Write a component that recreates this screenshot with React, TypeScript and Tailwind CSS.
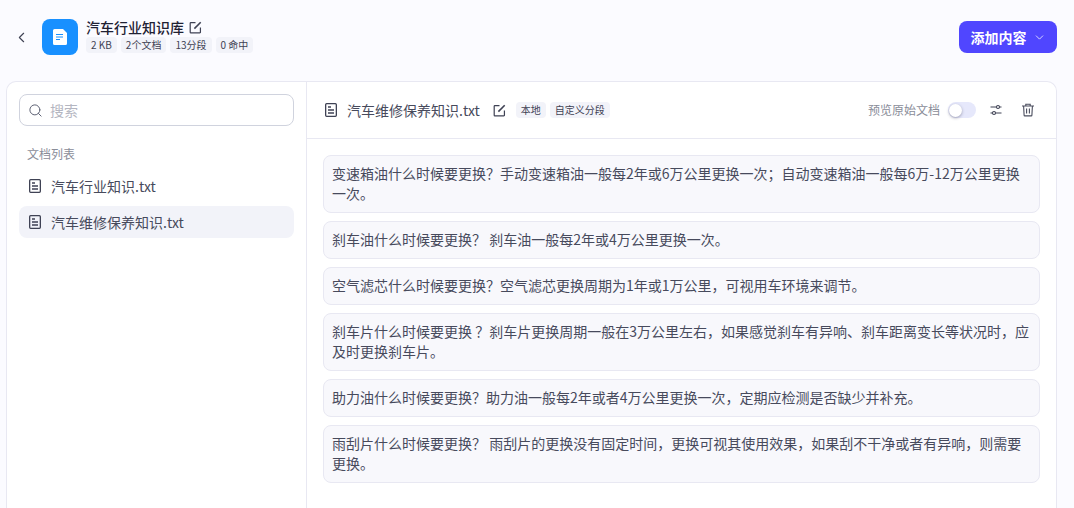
import { ChevronDown, ChevronLeft, Search } from "lucide-react"

const cjk = "font-['Noto_Sans_CJK_SC',sans-serif]"

const segments = [
  "变速箱油什么时候要更换？手动变速箱油一般每2年或6万公里更换一次；自动变速箱油一般每6万-12万公里更换一次。",
  "刹车油什么时候要更换？ 刹车油一般每2年或4万公里更换一次。",
  "空气滤芯什么时候要更换？空气滤芯更换周期为1年或1万公里，可视用车环境来调节。",
  "刹车片什么时候要更换 ？刹车片更换周期一般在3万公里左右，如果感觉刹车有异响、刹车距离变长等状况时，应及时更换刹车片。",
  "助力油什么时候要更换？助力油一般每2年或者4万公里更换一次，定期应检测是否缺少并补充。",
  "雨刮片什么时候要更换？ 雨刮片的更换没有固定时间，更换可视其使用效果，如果刮不干净或者有异响，则需要更换。",
]

const DocIcon = () => (
  <svg width="14" height="14" viewBox="0 0 14 14" fill="none" stroke="#3f4254" strokeWidth="1.3" className="shrink-0">
    <rect x="1.65" y="0.65" width="10.7" height="12.7" rx="1" />
    <path d="M4 4h3M4 7h6M4 10h6" />
  </svg>
)

const EditIcon = () => (
  <svg width="13" height="13" viewBox="0 0 14 14" fill="none" stroke="#3f4254" strokeWidth="1.3" className="shrink-0">
    <path d="M7 1.7H2a.7.7 0 0 0-.7.7v9.6c0 .4.3.7.7.7h9.6a.7.7 0 0 0 .7-.7V7" />
    <path d="M5.8 8.2 12.6 1.4" strokeWidth="1.7" />
  </svg>
)

const TuneIcon = () => (
  <svg width="12" height="12" viewBox="0 0 12 12" fill="none" stroke="#3f4254" strokeWidth="1.1">
    <path d="M0.5 3h6M9.5 3h2M0.5 9h2M5.5 9h6" />
    <circle cx="8" cy="3" r="1.5" />
    <circle cx="4" cy="9" r="1.5" />
  </svg>
)

const TrashIcon = () => (
  <svg width="14" height="14" viewBox="0 0 14 14" fill="none" stroke="#4a4d5e" strokeWidth="1.1" className="ml-[19px]">
    <path d="M1 3h12M4.8 3V1.2h4.4V3M2.6 3l.5 9.2c0 .4.3.7.7.7h6.4c.4 0 .7-.3.7-.7l.5-9.2M5.6 5.6v4.8M8.4 5.6v4.8" />
  </svg>
)

const Tag = ({ children }: { children: string }) => (
  <span className="rounded-[4px] bg-[#f2f3f9] px-[5px] text-[10px] leading-[16px] text-[#3f4254]">{children}</span>
)

export default function App() {
  return (
    <div className={`${cjk} flex h-screen flex-col overflow-hidden bg-[#fbfbff] text-[#474a5c]`}>
      <header className="flex h-[81px] shrink-0 items-center pb-[7px] pl-[13px] pr-[17px]">
        <ChevronLeft size={17} strokeWidth={1.6} className="text-[#3f4254]" />
        <div className="ml-[12px] flex h-9 w-9 items-center justify-center rounded-[8px] bg-[#1890ff]">
          <svg width="14" height="16" viewBox="0 0 14 16">
            <path d="M1.5 0H10l4 4v10.5a1.5 1.5 0 0 1-1.5 1.5h-11A1.5 1.5 0 0 1 0 14.5v-13A1.5 1.5 0 0 1 1.5 0z" fill="#fff" />
            <path d="M3 5.5h7M3 8h7M3 10.5h4" stroke="#1890ff" strokeWidth="1" />
          </svg>
        </div>
        <div className="mb-[4px] ml-2">
          <div className="flex items-center gap-[5px]">
            <span className="text-[14px] leading-5 font-medium text-[#1f2133]">汽车行业知识库</span>
            <EditIcon />
          </div>
          <div className="flex gap-1">
            <Tag>2 KB</Tag>
            <Tag>2个文档</Tag>
            <Tag>13分段</Tag>
            <Tag>0 命中</Tag>
          </div>
        </div>
        <button className="ml-auto flex h-8 w-[98px] items-center justify-center gap-[6px] rounded-[8px] bg-[#5046ff] text-[14px] font-semibold text-white">
          添加内容
          <ChevronDown size={13} strokeWidth={1.4} />
        </button>
      </header>

      <div className="ml-[6px] mr-[17px] flex min-h-0 flex-1 rounded-t-[10px] border border-b-0 border-[#e8e8f2] bg-white">
        <aside className="w-[300px] shrink-0 border-r border-[#e8e8f2] px-3 pt-3">
          <div className="flex h-8 items-center gap-[7px] rounded-[8px] border border-[#d0d3de] px-2">
            <Search size={15} strokeWidth={1.6} className="text-[#5f6375]" />
            <span className="text-[14px] text-[#b4b6c1]">搜索</span>
          </div>
          <div className="mt-[20px] px-2 text-[12px] leading-4 text-[#8a8d99]">文档列表</div>
          <div className="mt-[8px] flex flex-col">
            <div className="flex h-8 items-center gap-[9px] rounded-[8px] px-[9px] text-[14px]">
              <DocIcon />
              汽车行业知识.txt
            </div>
            <div className="mt-1 flex h-8 items-center gap-[9px] rounded-[8px] bg-[#f2f3f9] px-[9px] text-[14px]">
              <DocIcon />
              汽车维修保养知识.txt
            </div>
          </div>
        </aside>

        <section className="min-w-0 flex-1">
          <div className="flex h-[57px] items-center border-b border-[#e8e8f2] pl-[17px] pr-[21px]">
            <DocIcon />
            <span className="ml-[9px] text-[14px]">汽车维修保养知识.txt</span>
            <span className="ml-[13px]"><EditIcon /></span>
            <div className="ml-[10px] flex gap-1">
              <Tag>本地</Tag>
              <Tag>自定义分段</Tag>
            </div>
            <span className="ml-auto text-[12px] text-[#8a8d99]">预览原始文档</span>
            <div className="ml-2 flex h-4 w-7 items-center rounded-full bg-[#e6e8fb] pl-[1px]">
              <span className="h-[13px] w-[13px] rounded-full bg-white shadow-[0_1px_3px_rgba(60,60,90,0.45)]" />
            </div>
            <span className="ml-[14px]"><TuneIcon /></span>
            <TrashIcon />
          </div>
          <div className="flex flex-col gap-2 px-4 pt-4">
            {segments.map((text) => (
              <div key={text} className="rounded-[8px] border border-[#e8e8f2] bg-[#f8f8fc] px-2 pt-[7px] pb-[9px] text-[14px] leading-5">
                {text}
              </div>
            ))}
          </div>
        </section>
      </div>
    </div>
  )
}
